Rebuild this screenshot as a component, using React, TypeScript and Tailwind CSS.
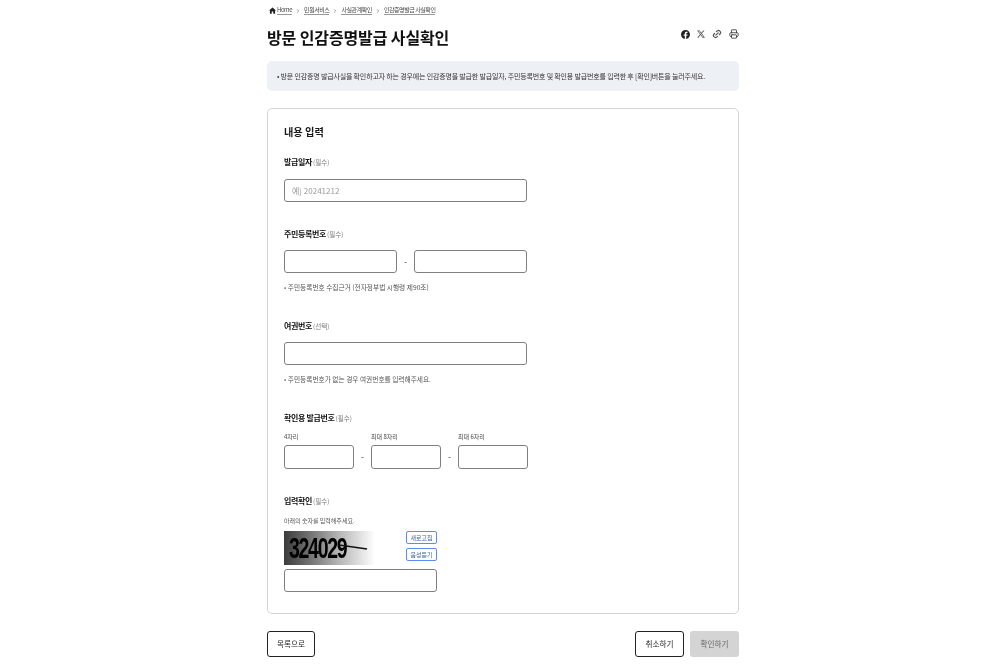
import { ChevronRight, Link2, Printer } from "lucide-react";

const font = { fontFamily: '"Noto Sans CJK KR", "Noto Sans", sans-serif' };

function Label({ title, note }: { title: string; note: string }) {
  return (
    <div className="flex h-[12px] items-center gap-[1px] leading-none">
      <span className="text-[8px] font-bold tracking-[-0.35px] text-[#111]">{title}</span>
      <span className="text-[6.5px] text-[#777]">{note}</span>
    </div>
  );
}

function Input({ className = "", placeholder }: { className?: string; placeholder?: string }) {
  return (
    <div className={`flex h-[23px] items-center rounded-[3px] border border-[#808080] bg-white px-[7px] text-[8px] text-[#999] ${className}`}>
      {placeholder}
    </div>
  );
}

function Help({ children }: { children: string }) {
  return <p className="mt-[9px] h-[10px] text-[6.7px] leading-[10px] text-[#555]">{children}</p>;
}

function Crumb({ children }: { children: string }) {
  return <span className="border-b border-[#999] text-[6px] leading-[8px] tracking-[-0.45px] text-[#444]">{children}</span>;
}

function Chevron() {
  return <ChevronRight size={6} className="text-[#555]" />;
}

function Dash() {
  return <span className="flex w-[17px] justify-center text-[9px] text-[#444]">-</span>;
}

function SmallBtn({ children }: { children: string }) {
  return (
    <div className="flex h-[13px] w-[31px] items-center justify-center rounded-[2px] border border-[#5b8def] bg-white text-[6px] text-[#3b5f9e]">
      {children}
    </div>
  );
}

function SubField({ label }: { label: string }) {
  return (
    <div>
      <p className="h-[9px] text-[6px] leading-[9px] text-[#444]">{label}</p>
      <Input className="mt-[4px] h-[24px] w-[70px]" />
    </div>
  );
}

export default function App() {
  return (
    <div style={font} className="flex h-[667px] w-[1000px] justify-center overflow-hidden pl-[6px] [will-change:transform]">
      <div className="w-[472px]">
        <nav className="flex h-[20px] items-center gap-[3px] pl-[2px] pt-[1px]">
          <svg width="7" height="7" viewBox="0 0 12 12" fill="#222" className="mr-[-2px]">
            <path d="M6 .8 0 6.2h1.6V11.4h3.1V7.8h2.6v3.6h3.1V6.2H12L6 .8Z" />
          </svg>
          <Crumb>Home</Crumb>
          <Chevron />
          <Crumb>민원서비스</Crumb>
          <Chevron />
          <Crumb>사실관계확인</Crumb>
          <Chevron />
          <Crumb>인감증명발급 사실확인</Crumb>
        </nav>
        <header className="flex h-[35px] items-start justify-between">
          <h1 className="text-[16px] font-bold leading-[34px] tracking-[-0.12px] text-[#111]">방문 인감증명발급 사실확인</h1>
          <div className="mt-[9px] flex items-center gap-[7px] text-[#333]">
            <svg width="9" height="9" viewBox="0 0 16 16" fill="#222">
              <path d="M16 8.05C16 3.6 12.42 0 8 0S0 3.6 0 8.05c0 4.01 2.93 7.34 6.75 7.95v-5.62H4.72V8.05h2.03V6.27c0-2.01 1.19-3.13 3.02-3.13.88 0 1.79.16 1.79.16v1.98h-1c-1 0-1.31.62-1.31 1.26v1.51h2.22l-.36 2.33H9.25V16C13.07 15.4 16 12.06 16 8.05Z" />
            </svg>
            <svg width="8" height="8" viewBox="0 0 16 16" fill="#555">
              <path d="M12.6.75h2.45L9.7 6.87 16 15.25h-4.93L7.2 10.18l-4.42 5.07H.33l5.72-6.55L0 .75h5.06l3.5 4.63L12.6.75Zm-.86 13.03h1.36L4.32 2.15H2.87l8.87 11.63Z" />
            </svg>
            <Link2 size={10} strokeWidth={2.8} className="-rotate-45 text-[#555]" />
            <Printer size={10} strokeWidth={2} className="text-[#333]" />
          </div>
        </header>
        <div className="mt-[6px] flex h-[30px] items-center rounded-[5px] bg-[#edf1f6] px-[10px] text-[7px] tracking-[-0.18px] whitespace-nowrap text-[#333]">
          • 방문 인감증명 발급사실을 확인하고자 하는 경우에는 인감증명을 발급한 발급일자, 주민등록번호 및 확인용 발급번호를 입력한 후 [확인]버튼을 눌러주세요.
        </div>

        <section className="mt-[17px] h-[506px] rounded-[5px] border border-[#d5d5d5] px-[16px]">
          <h2 className="mt-[17px] h-[12px] text-[10.2px] font-bold leading-[12px] text-[#1a1a1a]">내용 입력</h2>

          <div className="mt-[18px]"><Label title="발급일자" note="(필수)" /></div>
          <Input className="mt-[11px] w-[243px]" placeholder="예) 20241212" />

          <div className="mt-[26px]"><Label title="주민등록번호" note="(필수)" /></div>
          <div className="mt-[10px] flex w-[243px] items-center">
            <Input className="w-[113px]" />
            <Dash />
            <Input className="w-[113px]" />
          </div>
          <Help>• 주민등록번호 수집근거 (전자정부법 시행령 제90조)</Help>

          <div className="mt-[28px]"><Label title="여권번호" note="(선택)" /></div>
          <Input className="mt-[10px] w-[243px]" />
          <Help>• 주민등록번호가 없는 경우 여권번호를 입력해주세요.</Help>

          <div className="mt-[28px]"><Label title="확인용 발급번호" note="(필수)" /></div>
          <div className="mt-[8px] flex w-[244px] items-end">
            <SubField label="4자리" />
            <span className="flex h-[24px] items-center"><Dash /></span>
            <SubField label="최대 8자리" />
            <span className="flex h-[24px] items-center"><Dash /></span>
            <SubField label="최대 6자리" />
          </div>

          <div className="mt-[26px]"><Label title="입력확인" note="(필수)" /></div>
          <p className="mt-[9px] h-[9px] text-[6px] leading-[9px] text-[#555]">아래의 숫자를 입력해주세요.</p>
          <div className="mt-[6px] flex h-[34px] w-[153px] items-start justify-between">
            <div className="relative flex h-[34px] w-[91px] items-center overflow-hidden bg-gradient-to-r from-[#3c3c3c] via-[#b5b5b5] via-60% to-white pl-[5px]">
              <span className="text-[30px] font-bold leading-none tracking-[-2px] text-black" style={{ fontFamily: '"Liberation Sans", sans-serif', transform: "scaleX(0.65)", transformOrigin: "left" }}>324029</span>
              <svg className="absolute left-[55px] top-[13px]" width="30" height="8" viewBox="0 0 30 8">
                <path d="M0 1 L28 5" stroke="#111" strokeWidth="1.4" />
              </svg>
            </div>
            <div className="flex flex-col gap-[4px]">
              <SmallBtn>새로고침</SmallBtn>
              <SmallBtn>음성듣기</SmallBtn>
            </div>
          </div>
          <Input className="mt-[4px] w-[153px]" />
        </section>

        <footer className="mt-[17px] flex items-center justify-between">
          <div className="flex h-[26px] w-[48px] items-center justify-center rounded-[3px] border border-[#222] text-[7.6px] text-[#222]">목록으로</div>
          <div className="flex gap-[6px]">
            <div className="flex h-[26px] w-[49px] items-center justify-center rounded-[3px] border border-[#222] text-[7.6px] text-[#222]">취소하기</div>
            <div className="flex h-[26px] w-[49px] items-center justify-center rounded-[3px] bg-[#d4d4d4] text-[7.6px] text-[#666]">확인하기</div>
          </div>
        </footer>
      </div>
    </div>
  );
}
